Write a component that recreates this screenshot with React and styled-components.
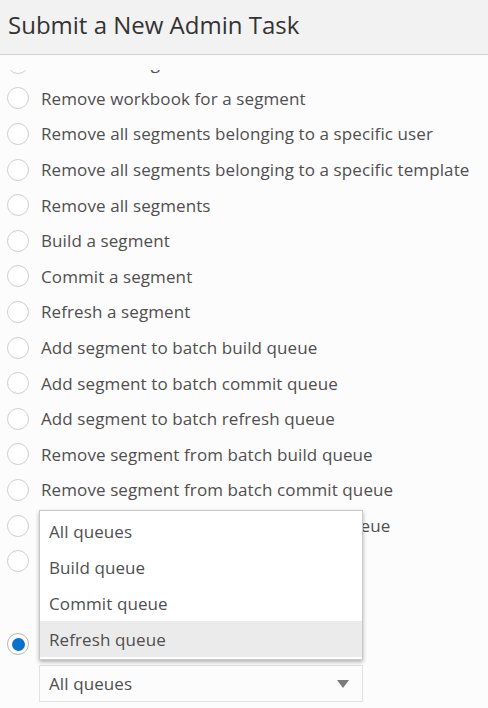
import React, {useLayoutEffect, useRef} from 'react';
import styled, {createGlobalStyle} from 'styled-components';

const GlobalStyle = createGlobalStyle`
    html, body {
        margin: 0;
        padding: 0;
        background: #fcfcfc;
    }
    body {
        font-family: "Open Sans", "Noto Sans", sans-serif;
    }
`;

const StyledPage = styled.div`
    display: flex;
    flex-direction: column;
    width: 488px;
    height: 708px;
    overflow: hidden;
    background: #fcfcfc;
`;

const StyledHeader = styled.header`
    flex: 0 0 auto;
    height: 55px;
    box-sizing: border-box;
    padding: 0 8px;
    display: flex;
    align-items: center;
    background: #f2f2f2;
    border-bottom: 1px solid #d3d3d3;

    & h1 {
        margin: -5px 0 0;
        font-size: 24px;
        font-weight: 400;
        color: #333;
    }
`;

const StyledBody = styled.div`
    flex: 1 1 auto;
    display: flex;
    flex-direction: column;
    min-height: 0;
    padding-top: 15px;
`;

const StyledScroller = styled.div`
    flex: 1 1 auto;
    overflow-y: auto;
    scrollbar-width: none;

    &::-webkit-scrollbar {
        display: none;
    }
`;

const StyledList = styled.div`
    display: flex;
    flex-direction: column;
    padding: 0 0 20px 7px;
`;

const StyledRow = styled.label`
    display: flex;
    align-items: center;
    gap: 12px;
    height: 35.6px;
    flex: 0 0 auto;
    font-size: 17px;
    color: #4f4f4f;
    white-space: nowrap;
    letter-spacing: 0.1px;
`;

const StyledRadio = styled.span`
    flex: 0 0 auto;
    width: 22px;
    height: 22px;
    box-sizing: border-box;
    border-radius: 50%;
    border: 1.5px solid ${p => p.checked ? '#b5b5b5' : '#cfcfcf'};
    background: #fff;
    display: flex;
    align-items: center;
    justify-content: center;

    &::after {
        content: '';
        display: ${p => p.checked ? 'block' : 'none'};
        width: 13px;
        height: 13px;
        border-radius: 50%;
        background: #0572ce;
    }
`;

const StyledChoice = styled.div`
    display: flex;
    flex-direction: column;
    margin-top: 47.5px;
    position: relative;
`;

const StyledSelect = styled.div`
    margin: 3px 0 0 32px;
    width: 324px;
    height: 37px;
    box-sizing: border-box;
    border: 1px solid #e2e2e2;
    background: #fcfcfc;
    display: flex;
    align-items: center;
    justify-content: space-between;
    padding: 0 13px 0 9px;
    font-size: 17px;
    letter-spacing: 0.1px;
    color: #4f4f4f;

    & .caret {
        width: 0;
        height: 0;
        border-left: 6px solid transparent;
        border-right: 6px solid transparent;
        border-top: 8px solid #7a7a7a;
    }
`;

const StyledMenu = styled.ul`
    position: absolute;
    left: 32px;
    bottom: 42px;
    width: 324px;
    box-sizing: border-box;
    margin: 0;
    padding: 2px 0;
    list-style: none;
    background: #fff;
    border: 1px solid #c9c9c9;
    box-shadow: 0 2px 4px rgba(0, 0, 0, 0.3);
`;

const StyledOption = styled.li`
    height: 36px;
    display: flex;
    align-items: center;
    padding-left: 9px;
    font-size: 17px;
    letter-spacing: 0.1px;
    color: #4f4f4f;
    background: ${p => p.active ? '#ebebeb' : 'transparent'};
`;

const tasks = [
    'Remove all segments for a workbook',
    'Remove workbook for a segment',
    'Remove all segments belonging to a specific user',
    'Remove all segments belonging to a specific template',
    'Remove all segments',
    'Build a segment',
    'Commit a segment',
    'Refresh a segment',
    'Add segment to batch build queue',
    'Add segment to batch commit queue',
    'Add segment to batch refresh queue',
    'Remove segment from batch build queue',
    'Remove segment from batch commit queue',
    'Remove segment from batch refresh queue',
    'Clear batch queue'
];

const queues = ['All queues', 'Build queue', 'Commit queue', 'Refresh queue'];

const App = () => {
    const scroller = useRef(null);

    useLayoutEffect(() => {
        if (scroller.current) scroller.current.scrollTop = 25.4;
    }, []);

    return (
        <StyledPage>
            <GlobalStyle/>
            <StyledHeader>
                <h1>Submit a New Admin Task</h1>
            </StyledHeader>
            <StyledBody>
                <StyledScroller ref={scroller}>
                    <StyledList>
                        {tasks.map(task => (
                            <StyledRow key={task}>
                                <StyledRadio/>
                                {task}
                            </StyledRow>
                        ))}
                        <StyledChoice>
                            <StyledRow>
                                <StyledRadio checked/>
                                Clear all batch queues
                            </StyledRow>
                            <StyledSelect>
                                All queues
                                <span className="caret"/>
                            </StyledSelect>
                            <StyledMenu>
                                {queues.map(q => (
                                    <StyledOption key={q} active={q === 'Refresh queue'}>{q}</StyledOption>
                                ))}
                            </StyledMenu>
                        </StyledChoice>
                    </StyledList>
                </StyledScroller>
            </StyledBody>
        </StyledPage>
    );
};

export default App;
